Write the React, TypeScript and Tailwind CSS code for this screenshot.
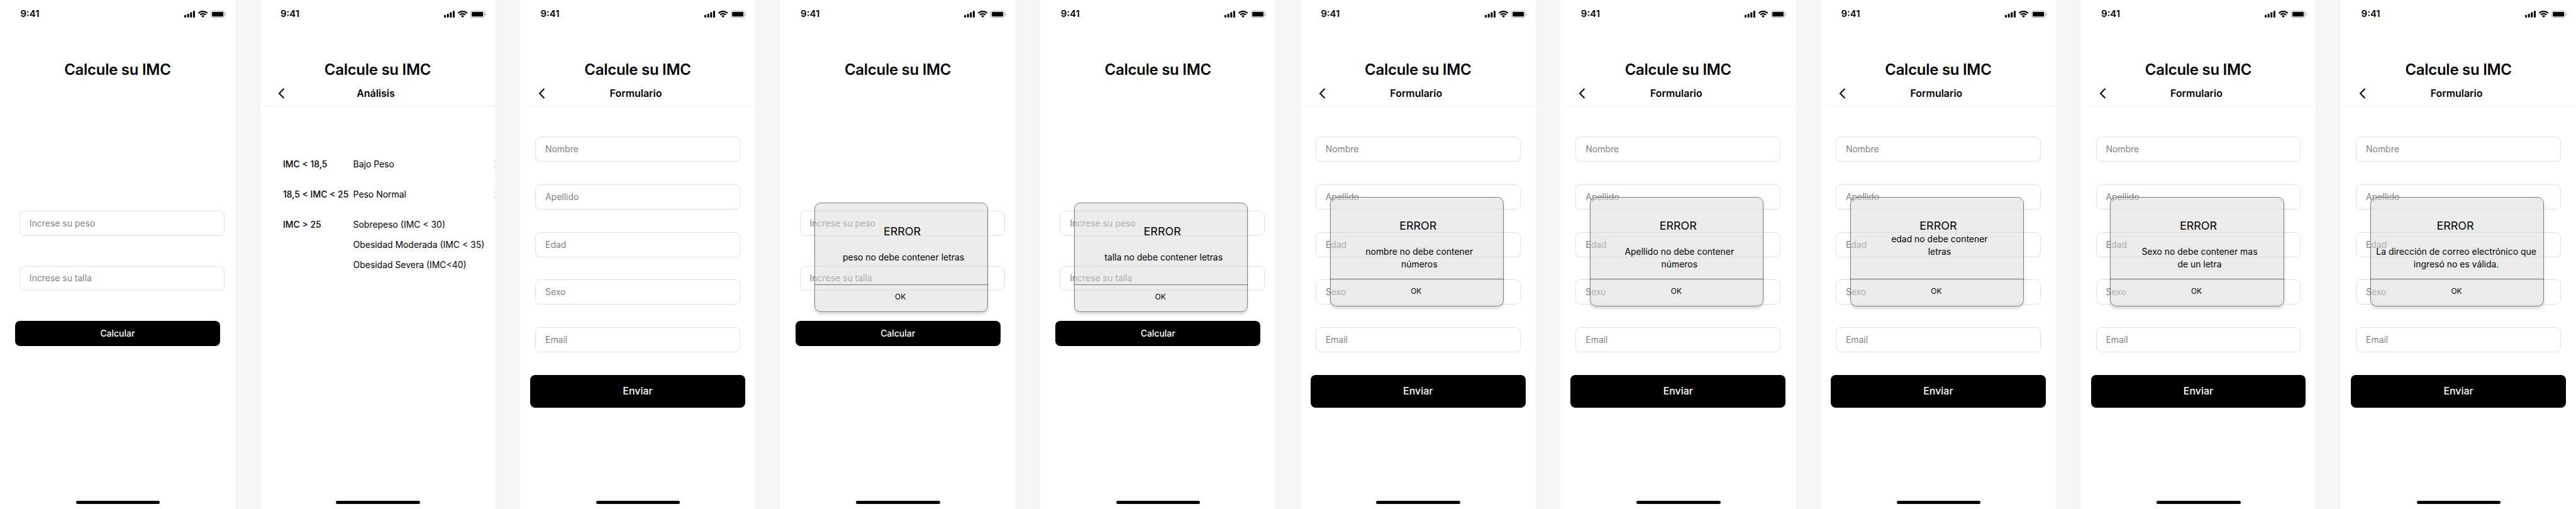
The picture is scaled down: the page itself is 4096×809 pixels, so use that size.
import React from 'react';

type ErrorDialog = {
  lines: string[];
  messageTop?: string;
  titleShift?: string;
  messageShift?: string;
};

function StatusBar() {
  return (
    <div className="flex h-11 shrink-0 items-start justify-between pl-[32.5px] pr-[14.67px]">
      <span className="mt-3 text-[15px] font-semibold leading-[21px]">9:41</span>
      <svg className="mt-[17.33px]" width="66.66" height="11.34" viewBox="0 0 66.66 11.34" fill="black">
        <rect x="0" y="6.9" width="3" height="4" rx="0.67" />
        <rect x="4.67" y="4.9" width="3" height="6" rx="0.67" />
        <rect x="9.33" y="2.5" width="3" height="8.4" rx="0.67" />
        <rect x="14" y="0.3" width="3" height="10.6" rx="0.67" />
        <path
          transform="translate(22 0)"
          d="M7.667 2.281C9.892 2.281 12.032 3.135 13.644 4.667C13.766 4.785 13.96 4.784 14.079 4.664L15.24 3.494C15.3 3.433 15.334 3.35 15.334 3.264C15.333 3.179 15.299 3.096 15.237 3.036C11.005 -1.017 4.328 -1.017 0.096 3.036C0.034 3.096 0 3.179 0 3.264C0 3.35 0.035 3.433 0.096 3.494L1.257 4.664C1.377 4.784 1.571 4.785 1.692 4.667C3.305 3.135 5.445 2.281 7.667 2.281ZM7.667 6.087C8.889 6.087 10.068 6.541 10.974 7.362C11.097 7.478 11.29 7.476 11.409 7.356L12.568 6.186C12.629 6.125 12.663 6.041 12.662 5.955C12.661 5.868 12.626 5.786 12.563 5.726C9.804 3.159 5.532 3.159 2.773 5.726C2.711 5.786 2.675 5.868 2.674 5.955C2.674 6.041 2.707 6.125 2.769 6.186L3.927 7.356C4.047 7.476 4.24 7.478 4.362 7.362C5.268 6.542 6.445 6.088 7.667 6.087ZM9.889 8.676C9.951 8.614 9.985 8.529 9.983 8.441C9.981 8.354 9.944 8.27 9.88 8.212C8.602 7.112 6.732 7.112 5.454 8.212C5.39 8.27 5.353 8.353 5.351 8.441C5.349 8.529 5.383 8.614 5.445 8.676L7.45 10.7C7.508 10.759 7.588 10.793 7.671 10.793C7.754 10.793 7.834 10.759 7.892 10.7Z"
        />
        <rect x="42.83" y="0.5" width="21" height="10.33" rx="2.17" fill="none" stroke="black" strokeOpacity="0.35" />
        <path d="M65.33 3.67V7.67C66.14 7.33 66.66 6.54 66.66 5.67C66.66 4.8 66.14 4 65.33 3.67Z" fillOpacity="0.4" />
        <rect x="44.33" y="2" width="18" height="7.33" rx="1.33" />
      </svg>
    </div>
  );
}

function NavBar({ title }: { title: string }) {
  return (
    <div className="ml-[7px] grid h-[41px] shrink-0 grid-cols-[24px_1fr_24px] items-center border-b border-[#f0f0f0] pl-4 pr-[29px]">
      <svg width="24" height="24" viewBox="0 0 24 24" fill="none" stroke="black" strokeWidth="2">
        <path d="M15.5 4L8 11.5L15.5 19" />
      </svg>
      <span className="text-center text-base font-semibold leading-6">{title}</span>
    </div>
  );
}

function Field({ label }: { label: string }) {
  return (
    <div className="flex h-10 w-[327px] shrink-0 items-center rounded-lg border border-[#e0e0e0] pl-[15px] text-sm text-[#828282]">
      {label}
    </div>
  );
}

function Dialog({ dialog, position }: { dialog: ErrorDialog; position: string }) {
  const { lines, messageTop = 'mt-[17px]', titleShift = 'pl-1', messageShift = 'pl-2' } = dialog;
  return (
    <div className={`absolute h-[175px] w-[277px] ${position}`}>
      <div className="absolute inset-0 rounded-[10px] border border-black bg-[#d9d9d9] opacity-50 shadow-[0_4px_4px_rgba(0,0,0,0.25)]" />
      <div className="relative flex h-full flex-col text-center">
        <div className="h-[131px] pt-[33px]">
          <div className={`text-lg leading-[27px] ${titleShift}`}>ERROR</div>
          <div className={`text-sm leading-5 ${messageTop} ${messageShift}`}>
            {lines.map((line) => (
              <div key={line}>{line}</div>
            ))}
          </div>
        </div>
        <div className="h-px bg-black/50" />
        <div className="pr-0.5 pt-2.5 text-xs leading-[18px]">OK</div>
      </div>
    </div>
  );
}

function Frame({ children, nav }: { children: React.ReactNode; nav?: string }) {
  return (
    <section className="relative flex h-[812px] w-[375px] shrink-0 flex-col overflow-hidden bg-white">
      <StatusBar />
      <h1 className="mt-[49px] shrink-0 text-center text-2xl font-semibold leading-9 tracking-[-0.01em]">Calcule su IMC</h1>
      {nav && <NavBar title={nav} />}
      {children}
      <div className="mb-2 ml-[121px] mt-auto h-[5px] w-[134px] shrink-0 rounded-full bg-black" />
    </section>
  );
}

function CalculatorScreen({ dialog }: { dialog?: ErrorDialog }) {
  return (
    <Frame>
      <div className="mt-[207px] flex flex-col gap-12 pl-[31px]">
        <Field label="Increse su peso" />
        <Field label="Increse su talla" />
      </div>
      <button className="ml-6 mt-12 h-10 w-[327px] shrink-0 rounded-lg bg-black text-sm font-medium text-white">Calcular</button>
      {dialog && <Dialog dialog={dialog} position="left-[54px] top-[323px]" />}
    </Frame>
  );
}

const RANGES = [
  { range: 'IMC < 18,5', results: ['Bajo Peso'], link: true },
  { range: '18,5 < IMC < 25', results: ['Peso Normal'], link: true },
  { range: 'IMC > 25', results: ['Sobrepeso (IMC < 30)', 'Obesidad Moderada (IMC < 35)', 'Obesidad Severa (IMC<40)'], link: false },
];

function AnalysisScreen() {
  return (
    <Frame nav="Análisis">
      <div className="mt-[76px] flex flex-col gap-4 pl-[36.5px] text-sm leading-8">
        {RANGES.map(({ range, results, link }) => (
          <div key={range} className="flex">
            <div className="w-28 shrink-0 whitespace-nowrap font-medium">{range}</div>
            <div className="w-[225.5px] shrink-0 whitespace-nowrap">
              {results.map((result) => (
                <div key={result}>{result}</div>
              ))}
            </div>
            {link && (
              <svg className="mt-[11px] shrink-0" width="6" height="10" viewBox="0 0 6 10" fill="none" stroke="#828282" strokeWidth="1.2">
                <path d="M0.5 0.5L5 5L0.5 9.5" />
              </svg>
            )}
          </div>
        ))}
      </div>
    </Frame>
  );
}

const FIELDS = ['Nombre', 'Apellido', 'Edad', 'Sexo', 'Email'];

function FormScreen({ dialog }: { dialog?: ErrorDialog }) {
  return (
    <Frame nav="Formulario">
      <div className="mt-12 flex flex-col gap-9 pl-6">
        {FIELDS.map((label) => (
          <Field key={label} label={label} />
        ))}
      </div>
      <button className="ml-4 mt-9 h-[52px] w-[343px] shrink-0 rounded-lg bg-black text-base font-medium text-white">Enviar</button>
      {dialog && <Dialog dialog={dialog} position="left-[47px] top-[314px]" />}
    </Frame>
  );
}

export default function App() {
  return (
    <div className="h-[809px] w-[4096px] overflow-hidden bg-[#f5f5f5]">
      <main className="flex h-[812px] w-[4110px] gap-10 font-['Inter',sans-serif] text-black antialiased [zoom:0.99659]">
        <CalculatorScreen />
        <AnalysisScreen />
        <FormScreen />
        <CalculatorScreen dialog={{ lines: ['peso no debe contener letras'] }} />
        <CalculatorScreen dialog={{ lines: ['talla no debe contener letras'] }} />
        <FormScreen dialog={{ lines: ['nombre no debe contener', 'números'] }} />
        <FormScreen dialog={{ lines: ['Apellido no debe contener', 'números'] }} />
        <FormScreen dialog={{ lines: ['edad no debe contener', 'letras'], messageTop: '-mt-[3px]' }} />
        <FormScreen dialog={{ lines: ['Sexo no debe contener mas', 'de un letra'] }} />
        <FormScreen
          dialog={{
            lines: ['La dirección de correo electrónico que', 'ingresó no es válida.'],
            titleShift: 'pr-[6px]',
            messageShift: 'pr-[3px]',
          }}
        />
      </main>
    </div>
  );
}
